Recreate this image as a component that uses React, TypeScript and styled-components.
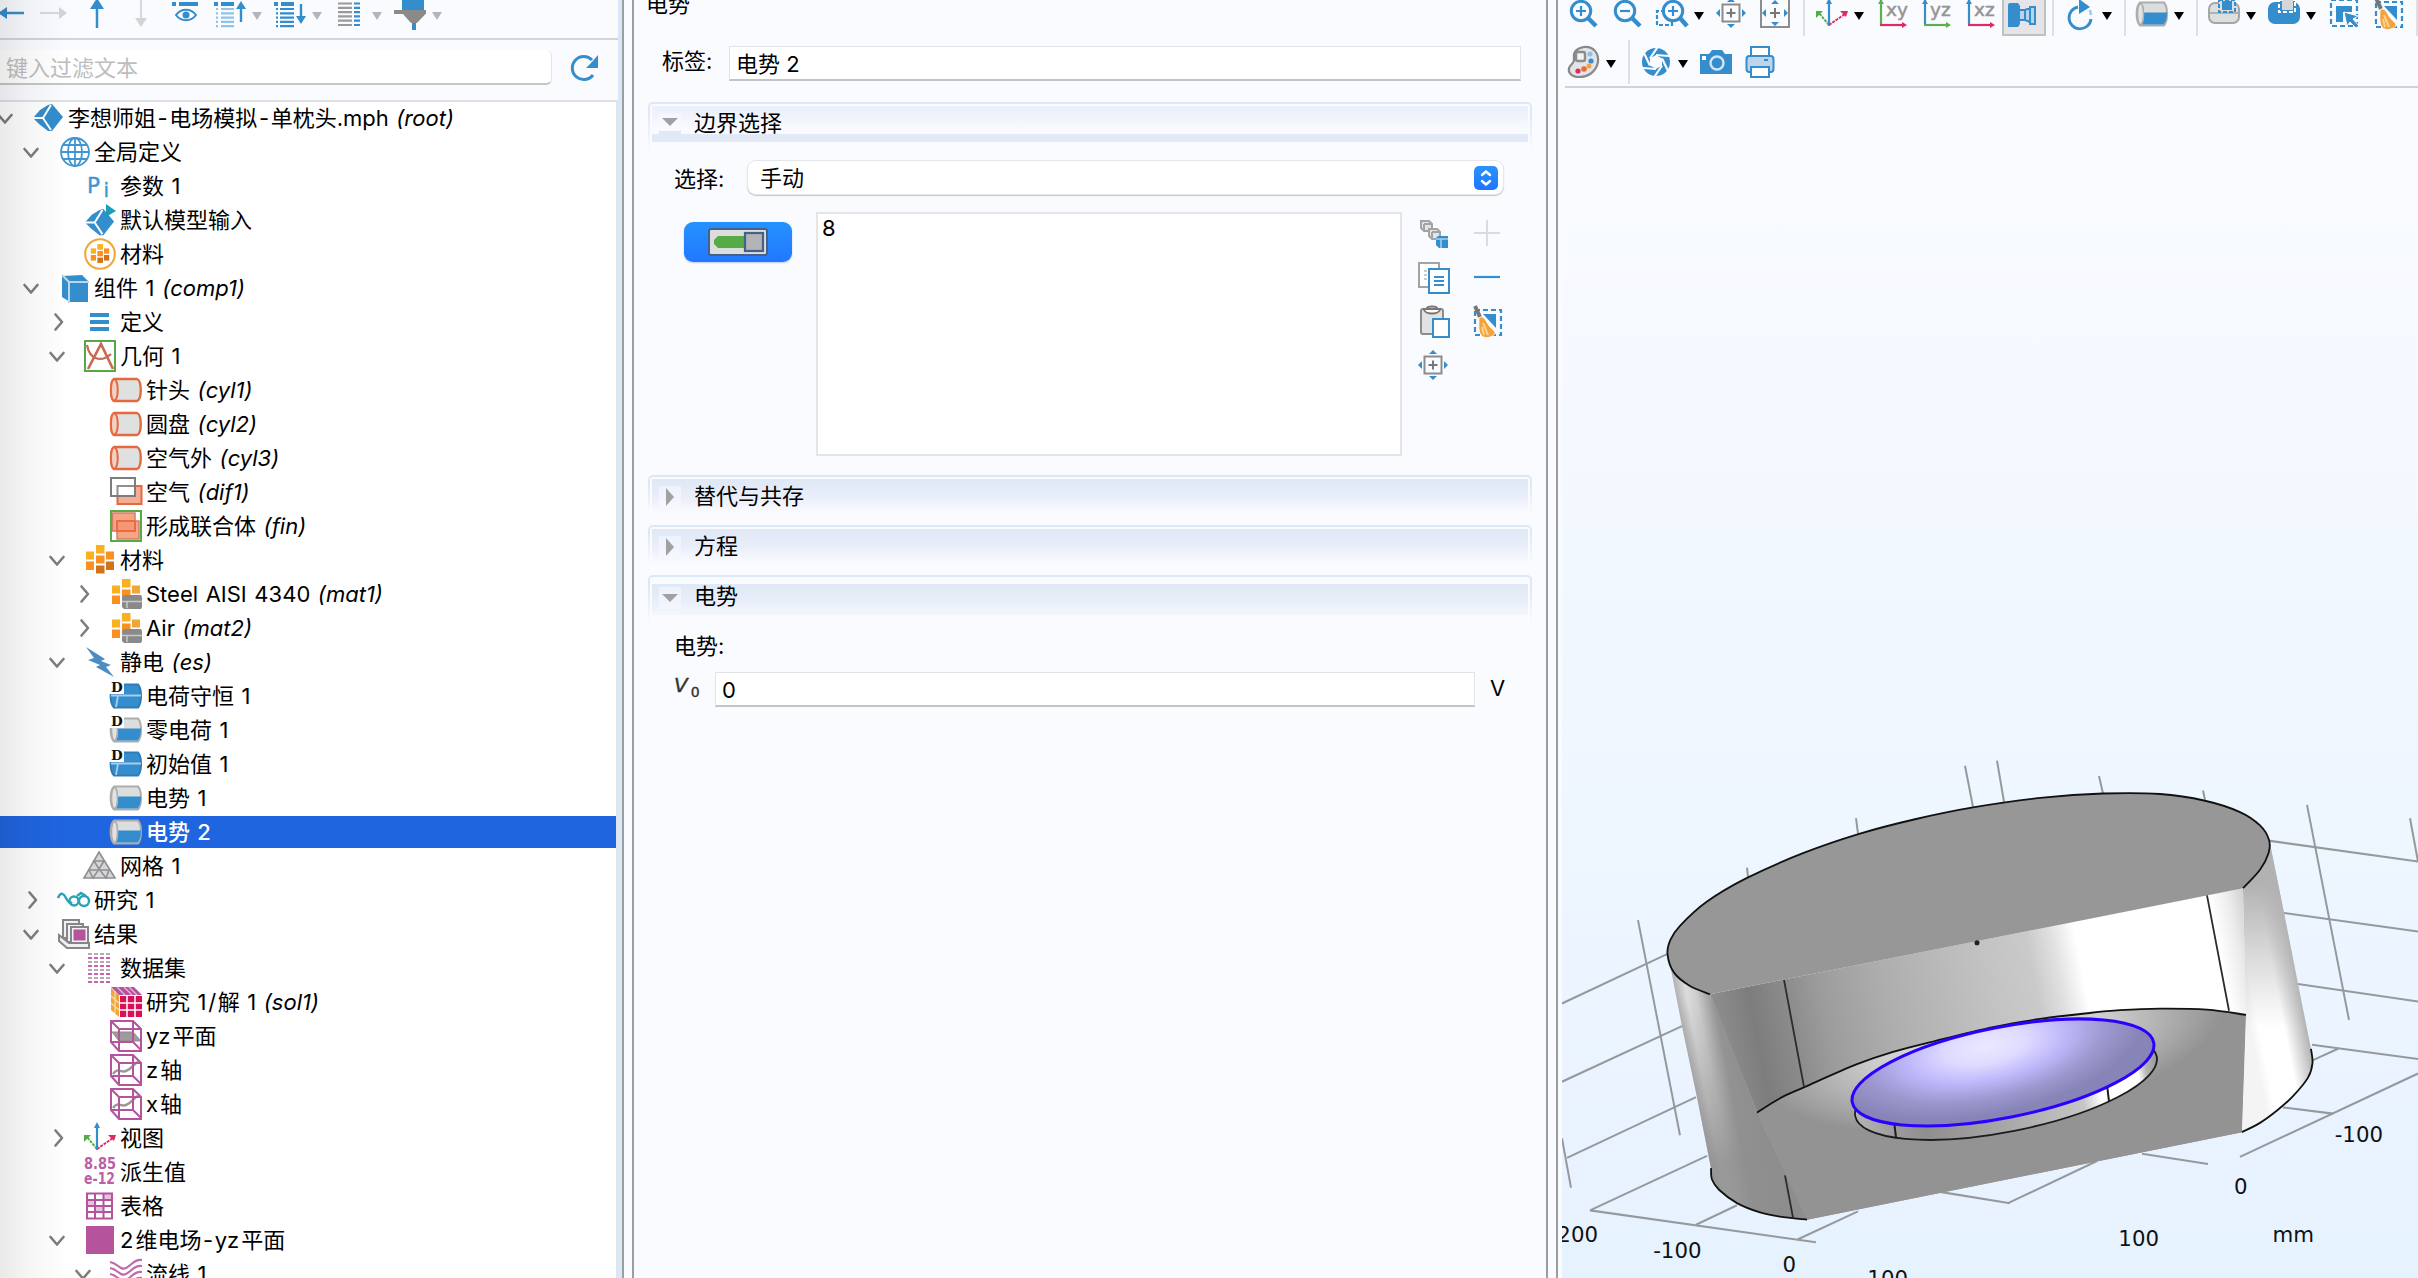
import React from 'react';
import styled, { createGlobalStyle } from 'styled-components';

const BLUE = '#348dcc';
const GRAY = '#8c8c8c';
const PURPLE = '#b5539d';
const ORANGE = '#f0a637';
const SANS = `Inter, "Noto Sans CJK SC", sans-serif`;

const Global = createGlobalStyle`
  html, body { margin: 0; padding: 0; overflow: hidden; }
  * { box-sizing: border-box; }
  body { font-family: ${SANS}; font-size: 22px; color: #000; background: #fafbff; }
`;

/* ---------- layout ---------- */
const Window = styled.div`display: flex; width: 2418px; height: 1278px; overflow: hidden; background: #fafbff;`;
const TreePanel = styled.aside`
  position: relative; width: 618px; flex: none; display: flex; flex-direction: column; overflow: hidden;
  &::after { content: ''; position: absolute; inset: 0 auto 0 0; width: 68px; pointer-events: none;
    background: linear-gradient(90deg, rgba(0,0,0,.085), rgba(0,0,0,.04) 40%, rgba(0,0,0,0)); }
`;
const Sash = styled.div<{ $edge?: boolean }>`
  flex: none; width: ${p => (p.$edge ? 16 : 12)}px;
  border: solid #9c9d9f; border-width: 0 2px;
  ${p => p.$edge && `border-left: 4px solid #d9e8f8; padding-left: 0; background: linear-gradient(90deg,#9c9d9f 2px,#fafbff 2px);`}
`;
const SettingsPanel = styled.main`width: 912px; flex: none; display: flex; flex-direction: column;`;
const GraphicsPanel = styled.section`flex: 1; min-width: 0; display: flex; flex-direction: column; overflow: hidden;`;

/* ---------- toolbars ---------- */
const TreeToolbar = styled.div`display: flex; height: 40px; flex: none; border-bottom: 2px solid #d3d4d6;`;
const GraphicsToolbar = styled.div<{ $h: number }>`display: flex; flex: none; height: ${p => p.$h}px; padding-left: 10px;`;
const ToolbarRule = styled.div`height: 2px; flex: none; margin-left: 7px; background: #d2d3d5;`;
const Tool = styled.svg<{ $ml?: number; $mt?: number }>`
  display: block; flex: none; overflow: visible; margin-left: ${p => p.$ml ?? 0}px; margin-top: ${p => p.$mt ?? -2}px;
`;
const Separator = styled.div<{ $mt?: number; $h: number; $ml?: number }>`width: 2px; flex: none; margin: ${p => p.$mt ?? 0}px 0 0 ${p => p.$ml ?? 12}px; height: ${p => p.$h}px; background: #dfe0e3;`;
const Caret = styled.div<{ $ml: number; $mt?: number; $light?: boolean }>`
  width: 10px; height: 8px; flex: none; margin: ${p => p.$mt ?? 12}px 0 0 ${p => p.$ml}px;
  background: ${p => (p.$light ? '#b4b5b7' : '#000')}; clip-path: polygon(0 0, 100% 0, 50% 100%);
`;
const PressedTool = styled.div`
  width: 44px; height: 38px; margin: -2px 0 0 4px; flex: none; background: #e5e5e7; border: 2px solid #bfc0c2;
  display: flex; padding: 0 4px;
`;

/* ---------- filter + tree ---------- */
const FilterRow = styled.div`display: flex; height: 60px; flex: none; padding-top: 10px;`;
const FilterInput = styled.div`
  width: 552px; height: 35px; background: #fff; border-radius: 0 6px 6px 0; border-bottom: 2px solid #c6c6c6; border-right: 1px solid #e4e4e4;
  color: #bdbdbd; padding-left: 6px; line-height: 36px;
`;
const Tree = styled.div`flex: 1; background: #fff; border-top: 2px solid #dfe0e2; border-right: 2px solid #e3e4e6; overflow: hidden;`;
const TreeList = styled.div`margin-top: -1px;`;
const TreeRow = styled.div<{ $level: number; $selected?: boolean }>`
  display: flex; align-items: center; height: 34px; padding-left: ${p => p.$level * 26}px; white-space: nowrap;
  ${p => p.$selected && `color: #fff; font-weight: 500; background: linear-gradient(#1f65e0,#1f65e0) 0 1px / 100% 32px no-repeat;`}
`;
const ChevronBox = styled.div`width: 32px; height: 34px; flex: none;`;
const NodeIcon = styled.svg`width: 32px; height: 32px; flex: none; display: block; overflow: visible;`;
const NodeText = styled.span`margin-left: 4px; line-height: 34px; word-spacing: 1.4px; em { font-style: italic; }`;
const Joint = styled.span<{ $before: number; $after: number }>`padding: 0 ${p => p.$after}px 0 ${p => p.$before}px;`;

/* ---------- settings ---------- */
const PanelTitle = styled.div`height: 34px; line-height: 34px; margin: -13px 0 25px 12px; flex: none;`;
const FieldRow = styled.div<{ $pl: number; $mt?: number }>`display: flex; padding-left: ${p => p.$pl}px; margin-top: ${p => p.$mt ?? 0}px; flex: none;`;
const Label = styled.div<{ $w?: number; $lh: number; $ml?: number }>`width: ${p => (p.$w ? `${p.$w}px` : 'auto')}; line-height: ${p => p.$lh}px; height: 34px; margin-left: ${p => p.$ml ?? 0}px;`;
const TextField = styled.div<{ $w: number }>`
  width: ${p => p.$w}px; height: 35px; background: #fff; border: 1px solid #e2e3e6; border-bottom: 2px solid #c3c4c6;
  padding-left: 6px; line-height: 34px;
`;
const Dropdown = styled.div`
  display: flex; justify-content: space-between; align-items: center; width: 755px; height: 33px; background: #fff; border-radius: 8px;
  padding: 0 5px 0 12px; line-height: 32px; box-shadow: 0 0 0 1px #e6e7ea, 0 1px 1px 1px #c6c7c9;
`;
const Stepper = styled.div`width: 24px; height: 24px; border-radius: 5px; background: linear-gradient(#2a93ff,#1e76ff);`;
const SectionFrame = styled.div<{ $h: number; $mt: number }>`
  flex: none; margin: ${p => p.$mt}px 14px 0; height: ${p => p.$h}px; padding: 2px 2px 0; border-radius: 5px 5px 0 0;
  background: linear-gradient(#dde8f5 20%, #fafbff);
`;
const SectionInner = styled.div<{ $pt: number }>`height: 100%; background: #fafbff; border-radius: 3px 3px 0 0; padding: ${p => p.$pt}px 2px 0;`;
const SectionBand = styled.div<{ $kind: 'bar' | 'closed' | 'open' }>`
  display: flex; align-items: center; padding-left: 7px;
  height: ${p => (p.$kind === 'bar' ? 36 : p.$kind === 'open' ? 38 : 36)}px;
  background: ${p =>
    p.$kind === 'bar'
      ? 'linear-gradient(#e1eaf6,#e1eaf6) 0 100% / 100% 8px no-repeat, linear-gradient(#e9eefa,#fafbff 24px)'
      : p.$kind === 'open'
      ? 'linear-gradient(#fafbff 5px,#dfe8f4 5px,#eaeffa 24px,#f4f7fc 36px,#fafbff 36px)'
      : 'linear-gradient(#e0e8f5,#e9eefa 18px,#fafbff 34px)'};
`;
const Twistie = styled.div<{ $bar?: boolean }>`
  width: 22px; height: 22px; display: flex; align-items: center; justify-content: center; background: rgba(248,250,255,.55);
  ${p => p.$bar && `border-bottom: 4px solid #dfe8f4;`}
`;
const SectionTitle = styled.span<{ $up?: number }>`margin-left: 13px; line-height: 32px; margin-top: ${p => -(p.$up ?? 0)}px;`;
const ToggleButton = styled.div`
  width: 108px; height: 40px; margin: 10px 24px 0 0; border-radius: 9px; background: linear-gradient(#2592ff,#2177ff);
  display: flex; align-items: center; justify-content: center; box-shadow: 0 1px 2px rgba(60,110,200,.35);
`;
const SelectionList = styled.div`width: 586px; height: 244px; background: #fff; border: 2px solid #e4e5e6; padding: 0 4px; line-height: 28px;`;
const ActionGrid = styled.div`display: grid; grid-template-columns: 32px 32px; grid-auto-rows: 32px; gap: 12px 21px; margin: 6px 0 0 16px; align-self: flex-start;`;
const Symbol = styled.div`
  width: 41px; height: 34px; font: italic 20px/26px "DejaVu Sans", sans-serif; color: #333; -webkit-text-stroke: .4px #333;
  sub { font: 14px/14px "DejaVu Sans", sans-serif; vertical-align: -5px; margin-left: 3px; }
`;

/* ---------- graphics ---------- */
const Canvas = styled.div`flex: 1; margin-left: 4px; background: linear-gradient(#fafbff, #f0f7ff 52%, #e7f2ff);`;

/* ---------- icons ---------- */
const Icon = ({ children, ml, mt, w = 32, x = 0 }: { children: React.ReactNode; ml?: number; mt?: number; w?: number; x?: number }) => (
  <Tool width={w} height={32} viewBox={`${x} 0 ${w} 32`} $ml={ml} $mt={mt} fill="none">{children}</Tool>
);

const ChevronSvg = styled.svg`overflow: visible;`;
const Chevron = ({ open }: { open?: boolean }) => (
  <ChevronBox>
    <ChevronSvg width="32" height="34" fill="none" stroke="#7d7d7d" strokeWidth="2.6" strokeLinecap="round" strokeLinejoin="round">
      <path d={open ? 'M-1.5 14 L5 21.5 L11.5 14' : 'M3.5 9.500 L10 17 L3.5 24.500'} />
    </ChevronSvg>
  </ChevronBox>
);

const Cube = () => (
  <g>
    <path d="M16 3 L20 2 L31 15 L20 29 L16 29 L7 22 L1 16 L8 8 Z" fill={BLUE} />
    <path d="M1 16 H11 L19 3 M11 16 L19 28" stroke="#fff" strokeWidth="2" fill="none" />
  </g>
);
const Cylinder = () => (
  <g stroke="#e5693f" strokeWidth="2.400">
    <path d="M4 5 H27 C32 7 32 25 27 27 H4 C0 25 0 7 4 5 Z" fill="#dfe1e0" />
    <path d="M4 5 C9 7 9 25 4 27 C0 25 0 7 4 5 Z" fill="#f3d0c4" strokeWidth="2" />
  </g>
);
const Boundary = ({ full, tag }: { full?: boolean; tag?: boolean }) => (
  <g>
    <path d="M4 4.500 H28 C32 9 32 23 28 27.500 H4 C-.5 23 -.5 9 4 4.500 Z" fill={full ? BLUE : '#dcdddd'} stroke={full ? '#2f7cb6' : '#adadad'} strokeWidth="2" />
    {full ? <path d="M1 15.500 H31 M8 15.500 L6 27" stroke="#a7cdea" strokeWidth="1.800" fill="none" />
      : <><path d="M8 14.500 H31 C31 20 30 24 27.500 26.500 H6 C8 22 8 18 8 14.500 Z" fill={BLUE} /><ellipse cx="4.500" cy="16" rx="3" ry="10.500" fill="#e2e2e2" stroke="#adadad" strokeWidth="1.500" /></>}
    {tag && <><rect x="-1" y="0" width="15" height="14" fill="#fff" /><text x="1" y="11.500" fontFamily="DejaVu Serif, serif" fontSize="13.500" fontWeight="700" fill="#111">D</text></>}
  </g>
);
const MaterialBlocks = ({ ring, part }: { ring?: boolean; part?: boolean }) => {
  const k = ring ? 0.66 : 1;
  return (
    <g>
      {ring && <circle cx="16" cy="16" r="14.800" stroke={ORANGE} strokeWidth="2" fill="none" />}
      <g transform={`translate(${16 - 16 * k} ${16 - 16 * k}) scale(${k})`}>
        <rect x="12" y="1" width="8.500" height="8.500" fill="#fbb020" /><rect x="2" y="7.500" width="8" height="8" fill="#fbb020" />
        <rect x="22" y="7.500" width="8" height="8" fill={part ? '#f0a637' : '#fa9020'} /><rect x="12" y="11.500" width="8.500" height="8" fill="#fa9020" />
        <rect x="2" y="17.500" width="8" height="8.500" fill="#fa9020" />
        {!part && <><rect x="22" y="17.500" width="8" height="8.500" fill="#cf7419" /><rect x="12" y="21.500" width="8.500" height="8" fill="#cf7419" /></>}
      </g>
      {part && <><path d="M14 17 H31 L32 19 V29 L31 31 H14 L12 29 V19 Z" fill="#8a8a8a" /><path d="M12 23.500 H32 M17 23.500 V30" stroke="#c9c9c9" strokeWidth="1.500" /></>}
    </g>
  );
};
const WireCube = ({ plane }: { plane?: boolean }) => (
  <g fill="none" stroke={PURPLE} strokeWidth="2">
    {plane ? <path d="M2 12 H23 L31 21 H9 Z" fill="#9c9c9e" stroke="#8c8c8c" strokeWidth="1" /> : <path d="M3 20 C8 13 10 19 16 17 S23 10 28 8" stroke="#999" strokeWidth="2.500" />}
    <path d="M1 1 H23 L31 9 V31 H9 L1 22 Z M9 9 H31 M9 9 V31 M1 1 L9 9 M23 1 V22 H1 M23 22 L31 30" />
  </g>
);
const Axes = () => (
  <g fill="none" strokeWidth="2">
    <path d="M13 27 L3 15" stroke="#4fae47" strokeDasharray="3 1" /><path d="M0 13 h7 l-7 7 z" fill="#4fae47" />
    <path d="M13 27 L29 16" stroke="#dd2a63" strokeDasharray="3 1" /><path d="M32 13 h-8 l6 6 z" fill="#dd2a63" />
    <path d="M13 28 V2" stroke={BLUE} strokeWidth="2.200" /><path d="M10 6 L13 0 L16 6 Z" fill={BLUE} />
  </g>
);
const Broom = () => (
  <g>
    <rect x="4" y="4" width="26" height="25" stroke={BLUE} strokeWidth="2.200" strokeDasharray="5 3" fill="none" />
    <path d="M12 8 H25 V22 Z" fill={BLUE} />
    <path d="M4 0 L9 11" stroke="#777" strokeWidth="4" />
    <path d="M8 12 C12 9 14 13 17 18 C19 22 25 25 24 28 C20 32 13 33 10 29 C7 25 8 18 8 12 Z" fill="#f3a33d" stroke="#fff" strokeWidth=".8" />
    <path d="M12 17 L17 29 M11 21 L13 29" stroke="#fbd489" strokeWidth="2" />
  </g>
);
const Magnifier = ({ minus, cx = 13 }: { minus?: boolean; cx?: number }) => (
  <g stroke={BLUE} fill="none">
    <circle cx={cx} cy="13" r="9.700" strokeWidth="3" />
    <path d={`M${cx - 5} 13 h10${minus ? '' : `M${cx} 8 v10`}`} strokeWidth="2.200" />
    <path d={`M${cx + 7} 20 L${Math.min(cx + 15, 31)} 28`} strokeWidth="4.500" />
  </g>
);
const ExtentsArrows = ({ r }: { r: number }) => (
  <g fill={BLUE}>
    <path d={`M16 ${15 - r} l-4 4 h8 z M16 ${15 + r} l-4 -4 h8 z M${16 - r} 15 l4 -4 v8 z M${16 + r} 15 l-4 -4 v8 z`} />
  </g>
);
const ZoomExtents = () => (
  <g>
    <ExtentsArrows r={15} />
    <rect x="7.500" y="6.500" width="17" height="17" stroke={GRAY} strokeWidth="2" fill="#fafbff" /><path d="M11.500 15 h9 M16 10.500 v9" stroke="#777" strokeWidth="2" />
  </g>
);
const PlaneView = ({ v, h, t }: { v: string; h: string; t: string }) => (
  <g>
    <path d="M3 27 V2" stroke={v} strokeWidth="2.200" /><path d="M0 6 L3 1 L6 6 Z" fill={v} />
    <path d="M2 27 H26" stroke={h} strokeWidth="2.200" /><path d="M24 24 L29 27 L24 30 Z" fill={h} />
    <text x="8" y="18" fontFamily="DejaVu Sans, sans-serif" fontSize="18.500" fill="#949494" stroke="#949494" strokeWidth=".5">{t}</text>
  </g>
);
const Bars = ({ x, w, c, y0 = 4 }: { x: number; w: number; c: string; y0?: number }) => (
  <path d={[0, 1, 2, 3, 4, 5].filter(i => y0 + i * 4.300 < 30).map(i => `M${x} ${y0 + i * 4.300} h${w}`).join('')} stroke={c} strokeWidth="2.200" />
);
const Shutter = () => (
  <g>
    <circle cx="16" cy="16" r="14" fill={BLUE} /><path d="M16 9 L22 12.500 V19.500 L16 23 L10 19.500 V12.500 Z" fill="#fafbff" />
    {[0, 60, 120, 180, 240, 300].map(a => <path key={a} transform={`rotate(${a} 16 16)`} d="M16 9 L29 10" stroke="#fafbff" strokeWidth="2.200" />)}
  </g>
);

const icons: Record<string, React.ReactNode> = {
  root: <Cube />,
  globe: <g fill="none" stroke="#3f96d2" strokeWidth="1.800"><circle cx="17" cy="16" r="14" /><ellipse cx="17" cy="16" rx="7" ry="14" /><path d="M17 2 V30 M3 16 H31 M5 9 H29 M5 23 H29" /></g>,
  pi: <g fontFamily="DejaVu Sans, sans-serif" fill="#3f96d2" stroke="#3f96d2" strokeWidth=".4"><text x="3" y="23" fontSize="21.500">P</text><text x="19.500" y="27" fontSize="20">i</text></g>,
  input: <g><g transform="translate(0 3) scale(.97)"><Cube /></g><path d="M22 0 L32 7 L22 13 Z" fill="#1c9fb6" /></g>,
  matring: <MaterialBlocks ring />,
  comp: <g><path d="M4 4 L24 3 L30 9 V30 H12 L4 25 Z" fill={BLUE} /><path d="M4 3 L11 10 V31 M11 10 H31" stroke="#b9d8ee" strokeWidth="2" fill="none" /></g>,
  defs: <path d="M6 9 H25 M6 16 H25 M6 23 H25" stroke={BLUE} strokeWidth="3.800" />,
  geom: <g fill="none"><rect x="1" y="1" width="30" height="30" stroke="#56a944" strokeWidth="2" /><g stroke="#c66a52" strokeWidth="2.600"><path d="M4 29 L17 4 L29 29" /><path d="M3 5 C6 21 18 22 27 14" strokeWidth="2.200" /></g></g>,
  cyl: <Cylinder />,
  dif: <g strokeWidth="2"><rect x="7.500" y="10" width="24" height="18" fill="#f3ae91" stroke="#e5693f" /><rect x="1" y="2" width="24" height="18" stroke="#7d7d7d" fill="#fff" /><path d="M7.500 19 V10 H24" fill="none" stroke="#8f8f8f" /></g>,
  fin: <g><rect x="1" y="1" width="30" height="30" fill="#fff" stroke="#56a944" strokeWidth="2" /><path d="M2.500 3 H25 V11 H29 V29 H7 V21 H2.500 Z" fill="#f7a585" stroke="#cf8068" strokeWidth="1.500" /><rect x="7" y="11" width="18" height="10" fill="#f79672" stroke="#ea6c45" strokeWidth="2" /></g>,
  mats: <MaterialBlocks />,
  mat: <MaterialBlocks part />,
  es: <path d="M2 1 L21 13 L17 15 L27 19 L22 21 L30 31 L12 21 L16 19 L4 14 L10 12 Z" fill="#4b8cc4" />,
  domD: <Boundary full tag />,
  bndD: <Boundary tag />,
  bnd: <Boundary />,
  mesh: <g fill="#d5d6d7" stroke="#8f8f91" strokeWidth="1.600"><path d="M15 2 L31 28 H0 Z" /><path d="M10 11 H20 L15 19 Z M5 20 H25 L22 28 L15 19 L9 28 Z" fill="none" /></g>,
  study: <g fill="none" stroke="#2aa2b8" strokeWidth="2.400"><path d="M0 14 C3 7 6 10 8 14 S12 20 14 18" /><circle cx="16" cy="17" r="4.500" /><circle cx="26" cy="17" r="5" /><path d="M19 12 L23 9 L28 12" /></g>,
  results: <g stroke="#85868a" strokeWidth="2" fill="#f1f1f2"><path d="M5 2 H21 V20 H5 Z" /><path d="M9 6 H25 V24 H9 Z" /><path d="M1 17 L11 25 H31 V30 H9 L1 23 Z" /><rect x="13" y="9" width="17" height="16" /><rect x="15.500" y="11.500" width="12" height="11" fill={PURPLE} stroke="none" /></g>,
  data: <g strokeWidth="2.200" strokeDasharray="4 2">{[2, 6, 10, 14, 18, 22, 26, 30].map((y, i) => <path key={y} d={`M4 ${y} H27`} stroke={i % 2 ? '#c55fae' : '#b9a9b7'} />)}</g>,
  sol: <g><path d="M1 2 L9 9 V31 L1 24 Z" fill={ORANGE} /><path d="M1 1 H24 L32 9 H9 Z" fill={PURPLE} /><rect x="10" y="10" width="22" height="21" fill="#d8105a" /><path d="M17 10 V31 M25 10 V31 M10 17 H32 M10 24 H32" stroke="#fff" strokeWidth="1.500" /><path d="M7 1 l8 8 M14 1 l8 8 M19 1 l8 8 M5 5 V28 M1 10 l8 7 M1 17 l8 7" stroke="#fff" strokeOpacity=".6" strokeWidth="1.200" /></g>,
  plane: <WireCube plane />,
  line: <WireCube />,
  view: <Axes />,
  derived: <g fontFamily="DejaVu Sans, sans-serif" fontWeight="700" fontSize="15.500" fill="#bb5fa6"><text x="0" y="13" textLength="32" lengthAdjust="spacingAndGlyphs">8.85</text><text x="0" y="28" textLength="31" lengthAdjust="spacingAndGlyphs">e-12</text></g>,
  table: <g><rect x="3" y="3.500" width="25" height="25" fill="#fff" /><path d="M19 4 h9 v6 h-9z M3 10 h8 v6 h-8z M11 16 h8 v6 h-8z" fill="#e5c3de" /><path d="M3 3.500 H28 V28.500 H3 Z M11 3 V28 M19.500 3 V28 M3 10 H28 M3 16 H28 M3 22 H28" stroke={PURPLE} strokeWidth="2" fill="none" /></g>,
  square: <rect x="2" y="2" width="28" height="28" fill={PURPLE} />,
  stream: <g fill="none" stroke="#bf6bad" strokeWidth="2.200">{[4, 10, 16, 22].map(y => <path key={y} d={`M0 ${y} C8 ${y + 1} 10 ${y + 9} 16 ${y + 6} S24 ${y - 3} 32 ${y - 2}`} />)}</g>,
};

type Node = [level: number, open: boolean | null, icon: string, text: string, tag?: string];
const nodes: Node[] = [
  [0, true, 'root', '李想师姐-电场模拟-单枕头.mph', '(root)'],
  [1, true, 'globe', '全局定义'],
  [2, null, 'pi', '参数 1'],
  [2, null, 'input', '默认模型输入'],
  [2, null, 'matring', '材料'],
  [1, true, 'comp', '组件 1', '(comp1)'],
  [2, false, 'defs', '定义'],
  [2, true, 'geom', '几何 1'],
  [3, null, 'cyl', '针头', '(cyl1)'],
  [3, null, 'cyl', '圆盘', '(cyl2)'],
  [3, null, 'cyl', '空气外', '(cyl3)'],
  [3, null, 'dif', '空气', '(dif1)'],
  [3, null, 'fin', '形成联合体', '(fin)'],
  [2, true, 'mats', '材料'],
  [3, false, 'mat', 'Steel AISI 4340', '(mat1)'],
  [3, false, 'mat', 'Air', '(mat2)'],
  [2, true, 'es', '静电', '(es)'],
  [3, null, 'domD', '电荷守恒 1'],
  [3, null, 'bndD', '零电荷 1'],
  [3, null, 'domD', '初始值 1'],
  [3, null, 'bnd', '电势 1'],
  [3, null, 'bnd', '电势 2'],
  [2, null, 'mesh', '网格 1'],
  [1, false, 'study', '研究 1'],
  [1, true, 'results', '结果'],
  [2, true, 'data', '数据集'],
  [3, null, 'sol', '研究 1/解 1', '(sol1)'],
  [3, null, 'plane', 'yz平面'],
  [3, null, 'line', 'z轴'],
  [3, null, 'line', 'x轴'],
  [2, false, 'view', '视图'],
  [2, null, 'derived', '派生值'],
  [2, null, 'table', '表格'],
  [2, true, 'square', '2维电场-yz平面'],
  [3, true, 'stream', '流线 1'],
];
const SELECTED = 21;

/* adds a little air where Latin characters touch Chinese ones */
const spaced = (text: string) =>
  text.split(/([-/]|[a-z0-9]+(?=[\u4e00-\u9fff]))/).map((part, i) =>
    i % 2 ? <Joint key={i} $before={/[-/]/.test(part) ? 1.6 : 0} $after={/[-/]/.test(part) ? 1.6 : 2}>{part}</Joint> : part,
  );

/* ---------- section header ---------- */
const Section = ({ title, kind, mt }: { title: string; kind: 'bar' | 'closed' | 'open'; mt: number }) => (
  <SectionFrame $h={kind === 'closed' ? 40 : 50} $mt={mt}>
    <SectionInner $pt={2}>
      <SectionBand $kind={kind}>
        <Twistie $bar={kind === 'bar'}>
          <svg width="16" height="18">
            <path d={kind === 'closed' ? 'M4 0 L12 9 L4 18 Z' : 'M0 5 H16 L8 13 Z'} fill="#a0a1a3" />
          </svg>
        </Twistie>
        <SectionTitle $up={kind === 'closed' ? 3 : kind === 'bar' ? 2 : 4}>{title}</SectionTitle>
      </SectionBand>
    </SectionInner>
  </SectionFrame>
);

/* ---------- 3D scene ---------- */
type P = [number, number];
const curve = (pts: P[], start = true) => {
  let d = start ? `M${pts[0]}` : `L${pts[0]}`;
  for (let i = 0; i < pts.length - 1; i++) {
    const a = pts[Math.max(i - 1, 0)], b = pts[i], c = pts[i + 1], e = pts[Math.min(i + 2, pts.length - 1)];
    d += `C${b[0] + (c[0] - a[0]) / 6} ${b[1] + (c[1] - a[1]) / 6} ${c[0] - (e[0] - b[0]) / 6} ${c[1] - (e[1] - b[1]) / 6} ${c[0]} ${c[1]}`;
  }
  return d;
};
const rim: P[] = [[1710, 987], [1690, 979], [1674, 966], [1667.500, 948], [1670.500, 934], [1680, 920.500], [1707, 897], [1747, 874], [1803, 850], [1860, 831], [1915, 817], [1973, 805.500], [2043, 796], [2103, 792], [2160, 792.500], [2205, 799], [2240, 810], [2260, 823], [2269, 837], [2268.500, 850], [2260, 866], [2243, 884]];
const floorArc: P[] = [[1757, 1102], [1780, 1088], [1805, 1077], [1857, 1055], [1893, 1043], [1933, 1033], [1993, 1019], [2040, 1011], [2087, 1005.500], [2120, 1002.500], [2160, 1001], [2207, 1002], [2246, 1007]];
const baseLeft: P[] = [[1711, 1156], [1712, 1167], [1719, 1177], [1737, 1190], [1760, 1199], [1780, 1203], [1807, 1206]];
const baseRight: P[] = [[2311, 1040], [2312.500, 1054], [2308, 1068], [2293, 1086], [2277, 1100], [2260, 1112], [2242, 1121]];
const gridLines = [
  '1562 996 1667 948', '1562 1072 1682 1018', '1567 1146 1696 1087', '1590 1197 1707 1144', '1638 915 1680 1124', '1562 1127 1571 1175',
  '1747 864 1748 873', '1856 816 1858 831', '1965 765 1973 805', '1590 1197 1816 1228', '1696 1211 1737 1192', '1798 1225 1858 1198',
  '1940 1179 2010 1190', '2008 1190 2097 1149', '2142 1142 2208 1152', '2240 1145 2418 1064', '2283 1097 2333 1103', '2313 1051 2338 1040',
  '2312 1036 2418 1050', '2298 977 2418 994', '2284 908 2418 926', '2270 838 2418 858', '2307 803 2349 1012', '2410 816 2418 858',
  '1997 760 2004 800', '2099 775 2103 792', '2203 789 2205 798',
];
const axisLabels: [string, number, number][] = [
  ['200', 1598, 1242], ['-100', 1701.5, 1258], ['0', 1796, 1272], ['100', 1908, 1286],
  ['-100', 2383, 1141.5], ['0', 2247.5, 1194], ['100', 2159, 1246], ['mm', 2314, 1242],
];

const SceneSvg = styled.svg`display: block;`;
const Scene = () => (
  <SceneSvg width="856" height="1190" viewBox="1562 88 856 1190">
    <defs>
      <linearGradient id="inner" gradientUnits="userSpaceOnUse" x1="1710" y1="987" x2="2243" y2="880">
        {([[0, '#8e8e8e'], [.07, '#7d7d7d'], [.14, '#8c8c8c'], [.2, '#9c9c9c'], [.32, '#aeaeae'], [.5, '#c2c2c2'], [.59, '#cacaca'], [.635, '#e0e0e0'], [.68, '#fff'], [.935, '#fff'], [.97, '#ebebeb'], [1, '#cfcfcf']] as [number, string][]).map(([o, c]) => <stop key={o} offset={o} stopColor={c} />)}
      </linearGradient>
      <linearGradient id="outerL" gradientUnits="userSpaceOnUse" x1="1668" y1="960" x2="1757" y2="942">
        <stop offset="0" stopColor="#a8a8a8" /><stop offset=".14" stopColor="#dcdcdc" /><stop offset=".24" stopColor="#cfcfcf" /><stop offset=".42" stopColor="#959595" /><stop offset=".7" stopColor="#8b8b8b" /><stop offset="1" stopColor="#828282" />
      </linearGradient>
      <linearGradient id="fadeL" gradientUnits="userSpaceOnUse" x1="0" y1="990" x2="0" y2="1150">
        <stop offset="0" stopColor="#909090" stopOpacity="0" /><stop offset="1" stopColor="#8e8e8e" stopOpacity=".85" />
      </linearGradient>
      <linearGradient id="outerR" gradientUnits="userSpaceOnUse" x1="2246" y1="1000" x2="2306" y2="988">
        <stop offset="0" stopColor="#f4f4f4" /><stop offset=".15" stopColor="#fff" /><stop offset=".55" stopColor="#fff" /><stop offset="1" stopColor="#a0a0a0" />
      </linearGradient>
      <linearGradient id="fadeR" gradientUnits="userSpaceOnUse" x1="0" y1="880" x2="0" y2="1020">
        <stop offset="0" stopColor="#b2b2b2" /><stop offset="1" stopColor="#b8b8b8" stopOpacity="0" />
      </linearGradient>
      <radialGradient id="floor" gradientUnits="userSpaceOnUse" cx="0" cy="0" r="1" gradientTransform="translate(1990 1030) rotate(-9) scale(235 85)">
        <stop offset="0" stopColor="#e6e6e6" /><stop offset=".5" stopColor="#cdcdcd" /><stop offset="1" stopColor="#939393" />
      </radialGradient>
      <radialGradient id="disk" gradientUnits="userSpaceOnUse" cx="0" cy="0" r="1" gradientTransform="translate(-12 -28) scale(160 66)">
        <stop offset="0" stopColor="#ebe8ff" /><stop offset=".25" stopColor="#dfdbff" /><stop offset=".5" stopColor="#beb8fb" /><stop offset=".75" stopColor="#9d99d0" /><stop offset="1" stopColor="#8784b7" />
      </radialGradient>
      <linearGradient id="diskSide" gradientUnits="userSpaceOnUse" x1="-153" y1="0" x2="153" y2="0">
        <stop offset="0" stopColor="#b5b5b5" /><stop offset=".12" stopColor="#9b9b9b" /><stop offset=".22" stopColor="#8f8f8f" /><stop offset=".5" stopColor="#aaa" /><stop offset=".74" stopColor="#c6c6c6" /><stop offset=".8" stopColor="#fff" /><stop offset=".93" stopColor="#fff" /><stop offset=".96" stopColor="#b5b5b5" /><stop offset="1" stopColor="#999" />
      </linearGradient>
    </defs>
    <g transform="translate(0 -21.680) scale(1 1.0293)" fill="none">
      {gridLines.map(l => { const [a, b, c, d] = l.split(' '); return <line key={l} x1={a} y1={b} x2={c} y2={d} stroke="#96999c" strokeWidth="2" />; })}
      <path d={`${curve(floorArc)}L2242 1121L1807 1206Z`} fill="#939393" />
      <path d={`${curve(floorArc)}L2242 1121L1807 1206Z`} fill="url(#floor)" />
      <path d={`M1710 987L2243 884L2246 1007${curve([...floorArc].reverse(), false)}Z`} fill="url(#inner)" />
      <path d={`M1668 948L1682 1018L1697 1087${curve(baseLeft, false)}L1757 1102L1710 984Z`} fill="url(#outerL)" />
      <path d={`M1668 948L1682 1018L1697 1087${curve(baseLeft, false)}L1757 1102L1710 984Z`} fill="url(#fadeL)" />
      <path d={`M2243 884L2260 866L2270 841L2284 908L2298 977${curve(baseRight, false)}L2246 1007Z`} fill="url(#outerR)" />
      <path d={`M2243 884L2260 866L2270 841L2284 908L2298 977${curve(baseRight, false)}L2246 1007Z`} fill="url(#fadeR)" />
      <path d={`${curve(rim)}Z`} fill="#979797" />
      <g stroke="#111" strokeWidth="1.800">
        <path d={curve(rim)} /><path d={curve(floorArc)} /><path d={curve(baseLeft)} /><path d={curve(baseRight)} />
        <path d="M1784 973L1804 1077M2207 891L2229 1003M1785 1163L1793 1204" stroke="#2c2c2c" />
      </g>
      <circle cx="1977" cy="937" r="2.500" fill="#222" />
      <ellipse cx="0" cy="0" rx="153.500" ry="44" transform="translate(2006 1076.500) rotate(-10.850)" fill="url(#diskSide)" stroke="#1c1c1c" strokeWidth="1.800" />
      <path d="M1894 1110L1896 1126M2107 1075L2109 1091" stroke="#1c1c1c" strokeWidth="2" />
      <ellipse cx="0" cy="0" rx="153.500" ry="44" transform="translate(2003 1063) rotate(-10.850)" fill="url(#disk)" stroke="#2b00ff" strokeWidth="3" />
    </g>
    <g fontFamily="DejaVu Sans, sans-serif" fontSize="21.300" fill="#111" textAnchor="end">
      {axisLabels.map(([t, x, y], i) => <text key={i} x={x} y={y}>{t}</text>)}
    </g>
  </SceneSvg>
);

export default function App() {
  return (
    <Window>
      <Global />
      <TreePanel>
        <TreeToolbar>
          <Icon w={26}><path d="M0 15 H24" stroke={BLUE} strokeWidth="2.500" /><path d="M-2 15 L7 9 V21 Z" fill={BLUE} /></Icon>
          <Icon x={38} w={30} ml={12}><path d="M40 15 H60" stroke="#d8d9dc" strokeWidth="2.200" /><path d="M67 15 L59 9 V21 Z" fill="#d3d4d6" /></Icon>
          <Icon x={88} w={18} ml={20}><path d="M97 30 V6" stroke={BLUE} strokeWidth="2.500" /><path d="M97 0 L90 11 H104 Z" fill={BLUE} /></Icon>
          <Icon x={132} w={18} ml={26}><path d="M141 2 V22" stroke="#d8d9dc" strokeWidth="2.200" /><path d="M141 29 L135 20 H147 Z" fill="#d3d4d6" /></Icon>
          <Icon x={170} w={30} ml={20}>
            <path d="M172 6 h4 M179 6 h19" stroke={BLUE} strokeWidth="4" /><path d="M176 17 C181 10 191 10 196 17 C191 24 181 24 176 17 Z" stroke={BLUE} strokeWidth="2" /><circle cx="186" cy="17" r="3.500" fill={BLUE} />
          </Icon>
          <Icon x={212} w={38} ml={12}>
            <path d="M214 6 h4 M221 6 h13" stroke={BLUE} strokeWidth="4" /><Bars x={216} w={2} c="#8fc3e8" y0={11} /><Bars x={221} w={13} c="#8fc3e8" y0={11} />
            <path d="M241 24 V8" stroke={BLUE} strokeWidth="2.400" /><path d="M241 3 L236 11 H246 Z" fill={BLUE} />
          </Icon>
          <Caret $ml={2} $light />
          <Icon x={272} w={36} ml={10}>
            <path d="M274 6 h4 M281 6 h13" stroke={BLUE} strokeWidth="4" /><Bars x={276} w={2} c={BLUE} y0={11} /><Bars x={280} w={14} c={BLUE} y0={11} />
            <path d="M301 6 V22" stroke={BLUE} strokeWidth="2.400" /><path d="M301 26 L296 18 H306 Z" fill={BLUE} />
          </Icon>
          <Caret $ml={4} $light />
          <Icon x={336} w={26} ml={14}><Bars x={338} w={14} c="#9a9a9a" y0={5.5} /><Bars x={354} w={6} c={BLUE} y0={5.5} /></Icon>
          <Caret $ml={10} $light />
          <Icon x={392} w={36} ml={10}><path d="M402 0 H424 V12 H402 Z M412 25 H416 V32 H412 Z" fill={BLUE} /><path d="M394 12 H426 V15.500 L417 25 H411 L403 16 H394 Z" fill="#8b8a87" /></Icon>
          <Caret $ml={4} $light />
        </TreeToolbar>
        <FilterRow>
          <FilterInput>键入过滤文本</FilterInput>
          <Icon ml={17} mt={2}><path d="M24 23 A11.500 11.500 0 1 1 23 8" stroke={BLUE} strokeWidth="3" /><path d="M29 3 V16 H17 L22 11 Z" fill={BLUE} /></Icon>
        </FilterRow>
        <Tree>
          <TreeList>
            {nodes.map(([level, open, icon, text, tag], i) => (
              <TreeRow key={i} $level={level} $selected={i === SELECTED}>
                {open === null ? <ChevronBox /> : <Chevron open={open} />}
                <NodeIcon viewBox="0 0 32 32">{icons[icon]}</NodeIcon>
                <NodeText>{spaced(text)}{tag && <> <em>{tag}</em></>}</NodeText>
              </TreeRow>
            ))}
          </TreeList>
        </Tree>
      </TreePanel>
      <Sash $edge />
      <SettingsPanel>
        <PanelTitle>电势</PanelTitle>
        <FieldRow $pl={28}><Label $w={67} $lh={30}>标签:</Label><TextField $w={792}>电势 2</TextField></FieldRow>
        <Section title="边界选择" kind="bar" mt={21} />
        <FieldRow $pl={40} $mt={9}>
          <Label $w={74} $lh={36}>选择:</Label>
          <Dropdown>手动<Stepper><svg width="24" height="24" fill="none" stroke="#fff" strokeWidth="2.400" strokeLinecap="round" strokeLinejoin="round"><path d="M8 9 L12 5.500 L16 9 M8 15 L12 18.500 L16 15" /></svg></Stepper></Dropdown>
        </FieldRow>
        <FieldRow $pl={50} $mt={17}>
          <ToggleButton>
            <svg width="60" height="28"><rect x="1" y="1" width="58" height="26" rx="2" fill="#dcdddd" stroke="#45618a" strokeWidth="2" /><path d="M10 8 H36 V20 H10 L6 16 V12 Z" fill="#56ab47" /><rect x="37" y="5" width="18" height="18" fill="#b3b4b5" stroke="#45618a" strokeWidth="2.200" /></svg>
          </ToggleButton>
          <SelectionList>8</SelectionList>
          <ActionGrid>
            <Icon mt={0}>
              <g stroke="#a2a3a5" strokeWidth="2" fill="#e3e4e5"><path d="M3 3 h8 l3 3 v7 h-8 l-3 -3 z M6 6 h8 M6 6 v6" /><path d="M11 11 h8 l3 3 v7 h-8 l-3 -3 z M14 14 h8 M14 14 v6" /></g>
              <path d="M18 20 L20 18 H30 V30 H21 L18 27 Z" fill={BLUE} /><path d="M18 21 H30 M23 21 V30" stroke="#a8cfec" strokeWidth="1.500" />
            </Icon>
            <Icon mt={0}><path d="M3 15 H29 M16 2 V28" stroke="#dadbde" strokeWidth="2" /></Icon>
            <Icon mt={0}><path d="M1 1 H21 V25 H1 Z" stroke="#a2a3a5" strokeWidth="2" fill="#fff" /><path d="M6 9 h3 M6 13 h3 M6 17 h3" stroke="#bbb" strokeWidth="1.600" /><rect x="11" y="7" width="20" height="24" fill="#fff" stroke={BLUE} strokeWidth="2" /><path d="M16 15 H26 M16 19 H26 M16 23 H26" stroke={BLUE} strokeWidth="2" /></Icon>
            <Icon mt={0}><path d="M3 15 H29" stroke={BLUE} strokeWidth="2.200" /></Icon>
            <Icon mt={0}><rect x="3" y="3" width="22" height="25" rx="2" fill="#e2e2e3" stroke="#8c8c8c" strokeWidth="2" /><path d="M6 3 C6 9 22 9 22 3 Z" fill="#fff" stroke="#7b7573" strokeWidth="2" /><path d="M9 2 C9 0 19 0 19 2" stroke="#7b7573" strokeWidth="2" /><rect x="15" y="13" width="16" height="18" fill="#fff" stroke={BLUE} strokeWidth="2" /></Icon>
            <Icon mt={0}><Broom /></Icon>
            <Icon mt={0}><g transform="translate(-1 0)"><ZoomExtents /></g></Icon>
          </ActionGrid>
        </FieldRow>
        <Section title="替代与共存" kind="closed" mt={19} />
        <Section title="方程" kind="closed" mt={10} />
        <Section title="电势" kind="open" mt={10} />
        <FieldRow $pl={40} $mt={5}><Label $lh={32}>电势:</Label></FieldRow>
        <FieldRow $pl={40} $mt={8}>
          <Symbol>V<sub>0</sub></Symbol>
          <TextField $w={760}>0</TextField>
          <Label $lh={32} $ml={15}>V</Label>
        </FieldRow>
      </SettingsPanel>
      <Sash />
      <GraphicsPanel>
        <GraphicsToolbar $h={36}>
          <Icon><Magnifier /></Icon>
          <Icon ml={12}><Magnifier minus /></Icon>
          <Icon ml={12}><path d="M9 13 H1 V27 H16 V21" stroke={BLUE} strokeWidth="2.200" strokeDasharray="4 2" /><Magnifier cx={17} /></Icon>
          <Caret $ml={6} />
          <Icon ml={11}><ZoomExtents /></Icon>
          <Icon ml={12}><rect x="2" y="0" width="28" height="29" stroke={GRAY} strokeWidth="2" /><ExtentsArrows r={13} /><path d="M11 15 h10 M16 10 v10" stroke="#777" strokeWidth="2" /></Icon>
          <Separator $h={36} />
          <Icon ml={11}><Axes /></Icon>
          <Caret $ml={6} />
          <Icon ml={14}><PlaneView v="#5bb150" h="#dd2a63" t="xy" /></Icon>
          <Icon ml={12}><PlaneView v={BLUE} h="#5bb150" t="yz" /></Icon>
          <Icon ml={12}><PlaneView v={BLUE} h="#dd2a63" t="xz" /></Icon>
          <PressedTool>
            <Icon mt={-1}><path d="M0 6 Q0 4 2 4 H10 L12 7 V25 L10 28 H0 Z" fill={BLUE} /><path d="M12 11 H17 V21 H12 M17 11 L22 9 V23 L17 21 M22 8 H27 V25 H22 Z" fill="#b9d4ea" stroke={BLUE} strokeWidth="2" /></Icon>
          </PressedTool>
          <Separator $h={36} $ml={6} />
          <Icon ml={10}><path d="M14 9 A11 11 0 1 0 27 21" stroke={BLUE} strokeWidth="2.800" /><path d="M15 1 L26 9 L15 16 Z" fill={BLUE} /><path d="M26 12 L27 17" stroke="#9ccbea" strokeWidth="2.500" /></Icon>
          <Caret $ml={6} />
          <Separator $h={36} />
          <Icon ml={10}><Boundary /></Icon>
          <Caret $ml={6} />
          <Separator $h={36} />
          <Icon ml={10}><rect x="1" y="5" width="30" height="20" rx="6" fill="#dddede" stroke="#a5a6a8" strokeWidth="2" /><path d="M1 15 H31" stroke="#a5a6a8" strokeWidth="1.600" /><rect x="11" y="2" width="16" height="12" fill="#dddede" stroke={BLUE} strokeWidth="2" strokeDasharray="4 2" /><rect x="14" y="3" width="10" height="9" fill={BLUE} /></Icon>
          <Caret $ml={6} />
          <Icon ml={12}><rect x="0" y="4" width="32" height="22" rx="7" fill={BLUE} /><rect x="11" y="2" width="16" height="12" fill={BLUE} stroke="#fff" strokeWidth="2" strokeDasharray="4 2" /><rect x="14" y="2" width="11" height="10" fill="#d5d6d8" /></Icon>
          <Caret $ml={6} />
          <Icon ml={12}><rect x="3" y="2" width="26" height="26" stroke={BLUE} strokeWidth="2.200" strokeDasharray="5 3" /><path d="M8 8 H24 V14 H15 V24 H8 Z" fill={BLUE} /><path d="M16 14 L30 18 L25 21 L31 28 L28 30 L22 24 L19 28 Z" fill={BLUE} stroke="#fafbff" strokeWidth="1" /></Icon>
          <Icon ml={12}><Broom /></Icon>
          <Separator $h={36} />
        </GraphicsToolbar>
        <GraphicsToolbar $h={50}>
          <Icon mt={10}>
            <path d="M16 1 C26 0 31 8 30 16 C28 26 20 31 11 31 C3 31 0 26 1 22 C3 17 7 18 6 12 C5 6 9 2 16 1 Z" fill="#e3e4e5" stroke="#87888a" strokeWidth="2.200" /><rect x="8" y="6" width="9" height="9" rx="2" fill="#f2f2f2" stroke="#8c8c8c" strokeWidth="2.400" />
            <circle cx="22" cy="8" r="2.600" fill="#8cc4ec" /><circle cx="23" cy="15" r="2.600" fill={BLUE} /><circle cx="21" cy="20" r="2.500" fill="#f3a33d" /><circle cx="16" cy="23" r="2.800" fill="#ea6a2f" /><circle cx="10" cy="25" r="2.600" fill="#dd2a63" />
          </Icon>
          <Caret $ml={6} $mt={24} />
          <Separator $h={44} $mt={4} />
          <Icon ml={10} mt={10}><Shutter /></Icon>
          <Caret $ml={6} $mt={24} />
          <Icon ml={12} mt={10}><path d="M0 8 H9 L12 4 H22 L25 8 H32 V28 H0 Z" fill={BLUE} /><circle cx="17" cy="17" r="6.500" stroke="#d4e6f5" strokeWidth="2.400" /><rect x="2" y="10" width="4" height="4" fill="#fff" /></Icon>
          <Icon ml={12} mt={10}><rect x="2.500" y="10" width="27" height="16" rx="3" fill="#bed4ea" stroke={BLUE} strokeWidth="2" /><rect x="7" y="1" width="18" height="9" fill="#fff" stroke={BLUE} strokeWidth="2" /><rect x="7" y="21" width="18" height="10" fill="#fff" stroke={BLUE} strokeWidth="2" /><path d="M20 14 h4" stroke={BLUE} strokeWidth="2" /></Icon>
        </GraphicsToolbar>
        <ToolbarRule />
        <Canvas><Scene /></Canvas>
      </GraphicsPanel>
    </Window>
  );
}
